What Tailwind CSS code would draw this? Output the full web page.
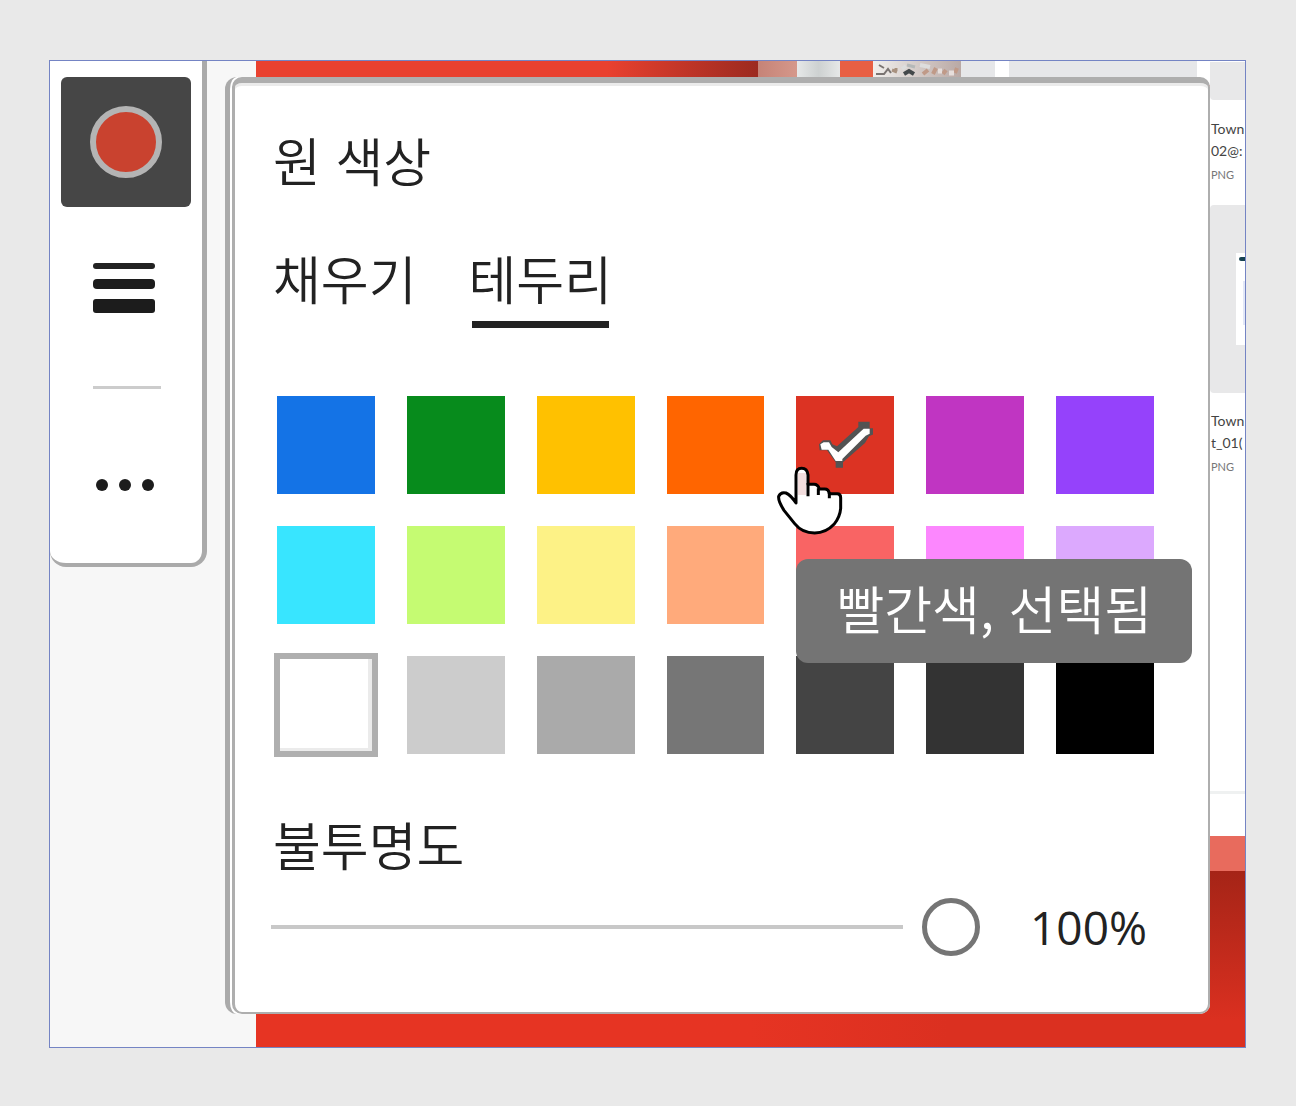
<!DOCTYPE html>
<html lang="ko">
<head>
<meta charset="utf-8">
<title>원 색상</title>
<script src="https://cdn.jsdelivr.net/npm/@tailwindcss/browser@4"></script>
</head>
<body class="bg-[#e9e9e9] font-['Noto_Sans_CJK_KR',sans-serif] text-[#222]">
<main class="pt-[60px] pr-[50px] pb-[58px] pl-[49px]">
  <div class="grid grid-cols-1 overflow-hidden border border-[#7484c4]">

    <!-- editor background -->
    <div class="flex min-w-0 bg-[#f7f7f7] pl-[206px] [grid-area:1/1]">
      <div class="flex min-w-0 flex-1 justify-end bg-linear-to-r from-[#e63423] from-50% to-[#db3020] to-70%">
        <div class="flex h-6 min-w-0 flex-1">
          <div class="flex-1 bg-linear-to-r from-[#e9412f] from-70% to-[#9c2a20]"></div>
          <div class="w-[39px] bg-linear-to-r from-[#c68377] to-[#d5988b]"></div>
          <div class="w-[43px] bg-linear-to-r from-[#e6e8e8] via-[#cdd1d1] to-[#e6e8e8]"></div>
          <div class="w-[33px] bg-[#e85f44]"></div>
          <svg class="h-6 w-[88px] bg-linear-to-r from-[#f1efed] to-[#b9a9a5]" viewBox="0 0 88 24" fill="none" aria-hidden="true">
            <path d="M3 13h8l4-5 3 4M6 4l5 3" stroke="#7a7472" stroke-width="2"/>
            <path d="M19 9l5 2M23 7v3" stroke="#a8917f" stroke-width="3"/>
            <path d="M31 13l5-3 5 3" stroke="#44494b" stroke-width="4"/>
            <path d="M34 4l8 2" stroke="#b5b8b8" stroke-width="3"/>
            <path d="M29 8l4-3M47 4l10 2" stroke="#ddd" stroke-width="4"/>
            <path d="M50 13l5-4M60 13l3-6M70 13l3-4M82 12l2-5" stroke="#c09a88" stroke-width="4"/>
            <path d="M65 10h4M76 12h5" stroke="#e6dedb" stroke-width="5"/>
          </svg>
          <div class="w-[34px] bg-[#e6e7e9]"></div>
          <div class="w-[14px] bg-white"></div>
          <div class="w-[188px] bg-[#e6e7e9]"></div>
          <div class="w-[13px] bg-white"></div>
        </div>
        <div class="flex w-[35px] flex-col bg-white pt-px font-['Lato',sans-serif] whitespace-nowrap text-[#444]">
          <div class="h-[38px] rounded-bl bg-[#e8e8e9]"></div>
          <div class="h-[105px] pt-[18px] pl-px">
            <p class="text-[14px] leading-[22px]">Town<br>02@:</p>
            <p class="pt-px text-[11px] leading-[24px] text-[#777]">PNG</p>
          </div>
          <div class="flex h-[188px] items-center justify-end rounded-l bg-[#e8e8e9]">
            <div class="h-[92px] w-[9px] bg-white pt-1 pl-[3px]">
              <div class="h-1 rounded-l bg-[#164150]"></div>
              <div class="mt-5 ml-1 h-11 bg-[#e3e8f7]"></div>
            </div>
          </div>
          <div class="h-[398px] pt-[17px] pl-px">
            <p class="text-[14px] leading-[22px]">Town<br>t_01(</p>
            <p class="pt-px text-[11px] leading-[24px] text-[#777]">PNG</p>
          </div>
          <div class="h-[45px] border-t-3 border-[#eff1f1]"></div>
          <div class="h-[35px] bg-[#e86b5d]"></div>
          <div class="flex-1 bg-linear-to-b from-[#a52417] to-[#db3020] to-85%"></div>
        </div>
      </div>
    </div>

    <!-- tool rail -->
    <nav aria-label="도구" class="flex w-[157px] flex-col items-start self-start rounded-b-[16px] border-r-5 border-b-4 border-[#aaa] bg-white px-[11px] pt-4 pb-[46px] [grid-area:1/1]">
      <button type="button" aria-label="색상" class="flex size-[130px] items-center justify-center rounded-md bg-[#464646]">
        <span class="size-[72px] rounded-full border-6 border-[#b4b4b4] bg-[#c9422f]"></span>
      </button>
      <button type="button" aria-label="두께" class="mt-14 ml-8 flex w-[62px] flex-col">
        <span class="h-[6px] w-full rounded-sm bg-[#222]"></span>
        <span class="mt-[10px] h-[10px] w-full rounded-sm bg-[#1c1c1c]"></span>
        <span class="mt-[10px] h-[14px] w-full rounded-[3px] bg-[#1c1c1c]"></span>
      </button>
      <hr class="mt-[73px] ml-8 h-[3px] w-[68px] border-0 bg-[#ccc]">
      <button type="button" aria-label="더 보기" class="mt-[90px] ml-[35px] flex gap-[11px]">
        <span class="size-3 rounded-full bg-[#1c1c1c]"></span>
        <span class="size-3 rounded-full bg-[#1c1c1c]"></span>
        <span class="size-3 rounded-full bg-[#1c1c1c]"></span>
      </button>
      <span class="h-[26px]"></span>
    </nav>

    <!-- colour popover -->
    <section aria-labelledby="title" class="mt-4 mr-[35px] mb-[33px] ml-[175px] min-w-0 rounded-l-xl rounded-r-[10px] border-l-5 border-[#aaa] bg-white pl-[2px] [grid-area:1/1]">
      <div class="rounded-[10px] border-t-6 border-r-2 border-b-2 border-l-3 border-[#aeaeae] bg-white pr-[54px] pb-[55px] pl-[38px] shadow-[inset_0_3px_0_#ebebeb]">
        <h1 id="title" class="pt-[45px] text-[52px] leading-[64px] font-[350]">원 색상</h1>
        <div role="tablist" class="mt-[54px] flex gap-[52px] text-[52px] leading-[64px] font-[350]">
          <button type="button" role="tab" aria-selected="false" class="flex flex-col gap-[11px]">채우기</button>
          <button type="button" role="tab" aria-selected="true" class="flex flex-col gap-[11px]">테두리<span class="mx-[3px] h-[7px] self-stretch bg-[#222]"></span></button>
        </div>

        <div role="radiogroup" aria-label="테두리 색상" class="mt-[68px] ml-1 grid grid-cols-7 gap-8">
          <input type="radio" name="color" aria-label="파란색" class="h-[98px] w-full appearance-none bg-[#1473e6]">
          <input type="radio" name="color" aria-label="녹색" class="h-[98px] w-full appearance-none bg-[#078b1c]">
          <input type="radio" name="color" aria-label="노란색" class="h-[98px] w-full appearance-none bg-[#ffc100]">
          <input type="radio" name="color" aria-label="주황색" class="h-[98px] w-full appearance-none bg-[#ff6500]">
          <div class="relative z-10 h-[98px]">
            <input type="radio" name="color" checked aria-label="빨간색" aria-describedby="tip" class="block h-full w-full appearance-none bg-[#dc3323]">
            <svg class="pointer-events-none absolute top-[25px] left-[22px] h-[48px] w-[55px]" viewBox="173 122 165 144" fill="none" aria-hidden="true">
              <path fill="#535353" d="M176 192L188 180H210L216 192L230 198L294 140V124H328V144H340V162L326 168L314 188L248 246V262H226V246L200 210H178Z"/>
              <path fill="#fff" d="M180 192L190 186H206L214 200L234 216L300 154L310 145H328V160L316 166L246 236V242H226L204 208H184Z"/>
            </svg>
            <div id="tip" role="tooltip" class="absolute top-[163px] left-0 h-[104px] rounded-xl bg-[#747474] pr-10 pl-10 text-[52px] leading-[98px] font-[350] whitespace-nowrap text-white">빨간색, 선택됨</div>
            <svg class="pointer-events-none absolute top-[69px] -left-5 h-[72px] w-[68px]" viewBox="48 252 204 216" stroke="#000" stroke-width="9" stroke-linejoin="round" aria-hidden="true">
              <path fill="#fff" d="M108 366V282Q108 262 125 262T144 282V310H162Q174 310 178 324H194Q206 324 208 338H232Q242 338 242 350V382Q240 408 222 430Q198 456 164 456Q126 456 104 428L72 388Q54 360 56 346Q62 332 78 336Q92 342 108 366Z"/>
              <path fill="none" d="M144 306v40M175 322v20M208 334v18"/>
              <path stroke="#f2dddd" stroke-width="24" d="M126 276v66"/>
            </svg>
          </div>
          <input type="radio" name="color" aria-label="자홍색" class="h-[98px] w-full appearance-none bg-[#c035c2]">
          <input type="radio" name="color" aria-label="보라색" class="h-[98px] w-full appearance-none bg-[#9542fb]">
          <input type="radio" name="color" aria-label="하늘색" class="h-[98px] w-full appearance-none bg-[#38e5ff]">
          <input type="radio" name="color" aria-label="연두색" class="h-[98px] w-full appearance-none bg-[#c5fb72]">
          <input type="radio" name="color" aria-label="연노란색" class="h-[98px] w-full appearance-none bg-[#fdf286]">
          <input type="radio" name="color" aria-label="연주황색" class="h-[98px] w-full appearance-none bg-[#ffaa7b]">
          <input type="radio" name="color" aria-label="연빨간색" class="h-[98px] w-full appearance-none bg-[#f96464]">
          <input type="radio" name="color" aria-label="분홍색" class="h-[98px] w-full appearance-none bg-[#fc87fe]">
          <input type="radio" name="color" aria-label="연보라색" class="h-[98px] w-full appearance-none bg-[#dca9fe]">
          <input type="radio" name="color" aria-label="흰색" class="h-[98px] w-full appearance-none border-3 border-[#afafaf] bg-white shadow-[inset_-4px_-3px_0_#ebebeb] outline-3 outline-[#afafaf]">
          <input type="radio" name="color" aria-label="밝은 회색" class="h-[98px] w-full appearance-none bg-[#ccc]">
          <input type="radio" name="color" aria-label="회색" class="h-[98px] w-full appearance-none bg-[#aaa]">
          <input type="radio" name="color" aria-label="중간 회색" class="h-[98px] w-full appearance-none bg-[#767676]">
          <input type="radio" name="color" aria-label="어두운 회색" class="h-[98px] w-full appearance-none bg-[#444]">
          <input type="radio" name="color" aria-label="진한 회색" class="h-[98px] w-full appearance-none bg-[#333]">
          <input type="radio" name="color" aria-label="검은색" class="h-[98px] w-full appearance-none bg-black">
        </div>

        <label for="opacity" class="mt-[58px] block text-[52px] leading-[64px] font-[350]">불투명도</label>
        <div class="mt-[21px] -ml-[2px] flex items-center">
          <input id="opacity" type="range" min="0" max="100" value="100" class="h-[58px] min-w-0 flex-1 appearance-none bg-transparent bg-[linear-gradient(#c8c8c8,#c8c8c8)] bg-[length:calc(100%-77px)_4px] bg-left bg-no-repeat [&::-webkit-slider-thumb]:size-[58px] [&::-webkit-slider-thumb]:appearance-none [&::-webkit-slider-thumb]:rounded-full [&::-webkit-slider-thumb]:border-5 [&::-webkit-slider-thumb]:border-solid [&::-webkit-slider-thumb]:border-[#757575] [&::-webkit-slider-thumb]:bg-white">
          <output for="opacity" class="w-[174px] pr-[7px] text-right font-['Open_Sans',sans-serif] text-[46px] leading-[60px]">100%</output>
        </div>
      </div>
    </section>
  </div>
</main>
</body>
</html>
